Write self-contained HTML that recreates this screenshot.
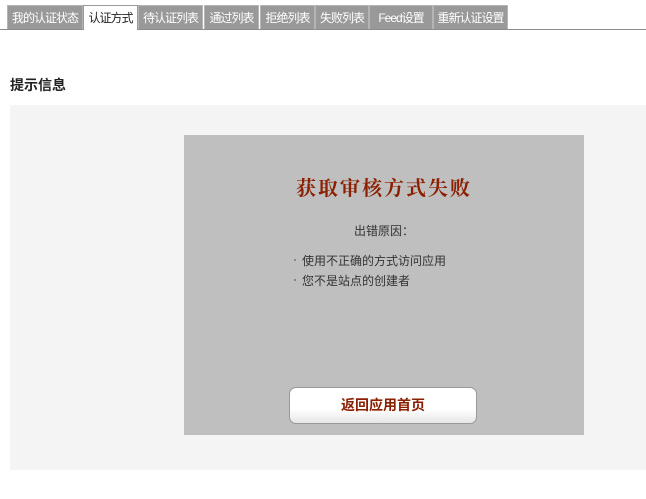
<!DOCTYPE html>
<html><head><meta charset="utf-8"><style>
body{margin:0;width:646px;height:499px;background:#fff;font-family:"Liberation Sans","Noto Sans CJK SC",sans-serif;position:relative;overflow:hidden}
.tabs{position:absolute;left:0;top:0;width:646px;height:30px;border-bottom:1px solid #8c8c8c;box-sizing:border-box}
.tab{position:absolute;top:5px;height:24px;background:#999;color:#fff;font-size:12px;letter-spacing:-1px;line-height:24px;text-align:center;border:1px solid #b5b5b5;border-bottom:none;box-sizing:border-box}
.tab.on{background:#fff;color:#222;border-color:#999;height:25px}
h3{position:absolute;left:10px;top:75px;margin:0;font-size:14px;font-weight:bold;color:#222}
.panel{position:absolute;left:10px;top:105px;width:636px;height:365px;background:#f4f4f4}
.box{position:absolute;left:184px;top:135px;width:400px;height:300px;background:#bfbfbf}
.t{position:absolute;left:0;width:400px;top:37px;text-align:center;font-family:"Liberation Serif","Noto Serif CJK SC",serif;font-size:20px;font-weight:bold;color:#8b2000;letter-spacing:2px}
.r{position:absolute;left:0;width:400px;top:87px;text-align:center;font-size:12px;color:#333}
.li{position:absolute;left:118px;font-size:12px;color:#333}
.li:before{content:"";position:absolute;left:-8px;top:7px;width:2px;height:2px;background:#888}
.btn{position:absolute;left:105px;top:252px;width:188px;height:37px;box-sizing:border-box;border:1px solid #999;border-radius:7px;background:linear-gradient(#fff 60%,#e6e6e6);text-align:center;line-height:35px;font-size:14px;font-weight:bold;color:#8b2000}
</style></head><body>
<div class="tabs">
<div class="tab" style="left:7px;width:76px">我的认证状态</div>
<div class="tab on" style="left:83px;width:55px">认证方式</div>
<div class="tab" style="left:138px;width:65px">待认证列表</div>
<div class="tab" style="left:204px;width:55px">通过列表</div>
<div class="tab" style="left:260px;width:55px">拒绝列表</div>
<div class="tab" style="left:315px;width:54px">失败列表</div>
<div class="tab" style="left:369px;width:64px">Feed设置</div>
<div class="tab" style="left:433px;width:75px">重新认证设置</div>
</div>
<h3>提示信息</h3>
<div class="panel"></div>
<div class="box">
<div class="t">获取审核方式失败</div>
<div class="r">出错原因：</div>
<div class="li" style="top:117px">使用不正确的方式访问应用</div>
<div class="li" style="top:137px">您不是站点的创建者</div>
<div class="btn">返回应用首页</div>
</div>
</body></html>
